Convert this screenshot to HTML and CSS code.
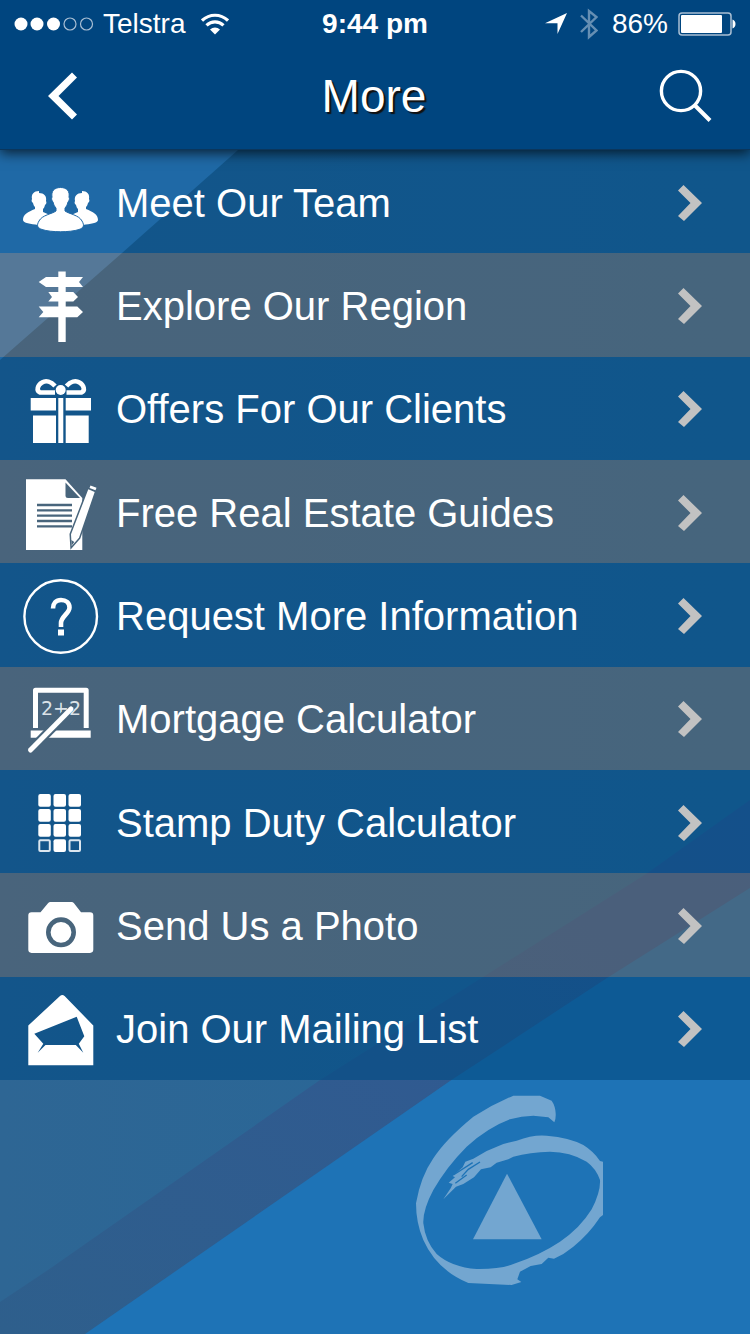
FILE: index.html
```html
<!DOCTYPE html>
<html lang="en">
<head>
<meta charset="utf-8">
<meta name="viewport" content="width=device-width">
<title>More</title>
<link rel="stylesheet" href="styles.css">
</head>
<body>
<div class="app">
  <svg class="backdrop" viewBox="0 0 750 1334" preserveAspectRatio="none" aria-hidden="true">
    <defs>
      <linearGradient id="base" x1="0" y1="0" x2="1" y2="0">
        <stop offset="0" stop-color="#2e6694"/><stop offset="1" stop-color="#266799"/>
      </linearGradient>
      <linearGradient id="band" x1="1" y1="0" x2="0" y2="1">
        <stop offset="0" stop-color="#325694"/><stop offset="1" stop-color="#2e5f8c"/>
      </linearGradient>
    </defs>
    <path fill="url(#base)" d="M0 0h750v1334H0z"/>
    <path fill="#509fe6" d="M0 150h238L122 253 0 360z"/>
    <path fill="url(#band)" d="M750 800L646 874 320 1080 48 1270 0 1302v32h90L450 1081 750 888z"/>
    <path fill="#1e73b6" d="M85 1334L450 1081 607 978 750 888v446z"/>
  </svg>

  <header class="header">
    <div class="status">
      <div class="status-group">
        <svg class="signal" viewBox="0 0 80 14" aria-hidden="true">
          <g fill="#fff"><circle cx="7" cy="7" r="6.5"/><circle cx="23" cy="7" r="6.5"/><circle cx="39.500" cy="7" r="6.500"/></g>
          <g fill="none" stroke="#a9bfd4" stroke-width="1.200"><circle cx="56" cy="7" r="6"/><circle cx="72.500" cy="7" r="6"/></g>
        </svg>
        <span class="carrier">Telstra</span>
        <svg class="wifi" viewBox="0 0 28 22" aria-hidden="true">
          <g fill="none" stroke="#fff" stroke-width="3.200"><path d="M1 7.500C8.500 .500 19.500 .500 27 7.500"/><path d="M5.500 12.300C10.500 7.600 17.500 7.600 22.500 12.300"/></g>
          <path fill="#fff" d="M9 16.500c3-2.700 7-2.700 10 0L14 21.500z"/>
        </svg>
      </div>
      <time class="clock">9:44 pm</time>
      <div class="status-group status-right">
        <svg class="location" viewBox="0 0 22 22" aria-hidden="true"><path fill="#fff" d="M22 0L12.500 21V10.300H0z"/></svg>
        <svg class="bluetooth" viewBox="0 0 18 32" aria-hidden="true"><path fill="none" stroke="#668fb3" stroke-width="2.400" d="M1 7.500l15.500 15L9 29V3l7.500 6L1 24"/></svg>
        <span class="percent">86%</span>
        <svg class="battery" viewBox="0 0 58 24" aria-hidden="true">
          <rect x="1" y="1" width="52" height="22" rx="3" fill="none" stroke="#a9bfd4" stroke-width="1.500"/>
          <rect x="3" y="3" width="41" height="18" rx="1" fill="#fff"/>
          <path fill="#fff" d="M54.500 7.500c4 1 4 8 0 9z"/>
        </svg>
      </div>
    </div>
    <nav class="nav">
      <button class="nav-button" type="button" aria-label="Back">
        <svg class="back" viewBox="0 0 29 48" aria-hidden="true"><path fill="#fff" d="M24 .500l5 5L10.500 24 29 42.500l-5 5L0 24z"/></svg>
      </button>
      <h1 class="title">More</h1>
      <button class="nav-button" type="button" aria-label="Search">
        <svg class="search" viewBox="0 0 54 54" aria-hidden="true"><g fill="none" stroke="#fff"><circle cx="22" cy="22" r="19.600" stroke-width="3.400"/><path stroke-width="4" d="M35.500 36L51 51.500"/></g></svg>
      </button>
    </nav>
  </header>

  <main class="menu">
    <a class="row" href="#team">
      <svg class="icon" viewBox="0 0 76 76" aria-hidden="true">
        <path d="M16 28c5 0 8 3 7 8 1 2 0 3-1 4-.5 2-1 3-2 4v3l7 3v10H15c-7-1-15-2-15-5 0-6 5-8 12-11v-2c-1-1-1.500-2-2-4-1-1-2-2-1-4-1-5 2-8 7-8z"/>
        <path d="M59 28c-5 0-8 3-7 8-1 2 0 3 1 4 .5 2 1 3 2 4v3l-7 3v10h12c7-1 15-2 15-5 0-6-5-8-12-11v-2c1-1 1.500-2 2-4 1-1 2-2 1-4 1-5-2-8-7-8z"/>
        <path class="body-outline" d="M37.500 22.500c6.500 0 9.500 4 8.500 9.500 1 2 0 4-1 5-.6 3-2 5-3 6v3c4 3 14 4 17 10 3 5 1 7-3 8.500-9 3-28 3-37 0-4-1.500-6-3.500-3-8.500 3-6 13-7 17-10v-3c-1-1-2.400-3-3-6-1-1-2-3-1-5-1-5.500 2-9.500 8.500-9.500z"/>
      </svg>
      <span class="label">Meet Our Team</span>
      <svg class="chevron" viewBox="0 0 24 36" aria-hidden="true"><path d="M5.500 0L24 18 6 36 0 31l12.500-13L0 5.500z"/></svg>
    </a>
    <a class="row" href="#region">
      <svg class="icon" viewBox="0 0 76 76" aria-hidden="true">
        <path d="M35.300 3.500h7.400V74h-7.400z"/>
        <path d="M15.700 14L23 9h37l-4 5 4 5H23zM25.300 24h25L55 29l-4.700 4.500h-25L29 29zM15.700 38.500h38.600L60 44l-5.700 5.300H15.700l4.600-5.300z"/>
      </svg>
      <span class="label">Explore Our Region</span>
      <svg class="chevron" viewBox="0 0 24 36" aria-hidden="true"><path d="M5.500 0L24 18 6 36 0 31l12.500-13L0 5.500z"/></svg>
    </a>
    <a class="row" href="#offers">
      <svg class="icon" viewBox="0 0 76 76" aria-hidden="true">
        <path d="M7.700 27H33v12.500H7.700zM42.700 27H68v12.500H42.700zM35.300 27h5v45h-5zM10 44.500h23V72H10zM42.700 44.500h23V72h-23z"/>
        <circle cx="37.700" cy="19" r="5"/>
        <g fill="none" stroke="#fff" stroke-width="4.600"><path d="M32 21.500H17c-4-2-2.500-7.500 2-10 4-2.500 9-1 13 3.500"/><path d="M43.500 21.500h15c4-2 2.500-7.500-2-10-4-2.500-9-1-13 3.500"/></g>
      </svg>
      <span class="label">Offers For Our Clients</span>
      <svg class="chevron" viewBox="0 0 24 36" aria-hidden="true"><path d="M5.500 0L24 18 6 36 0 31l12.500-13L0 5.500z"/></svg>
    </a>
    <a class="row" href="#guides">
      <svg class="icon" viewBox="0 0 76 76" aria-hidden="true">
        <path d="M3 4.300h39.500L59.300 23v52H3z"/>
        <path class="cut" d="M42.500 7.500L57 23H45q-2.500 0-2.500-2.500z"/>
        <path class="cut-line" stroke-width="2.300" d="M14 30h35M14 35.300h35M14 40.700h35M14 46h35M14 51.300h35"/>
        <path class="cut-line" stroke-width="3" d="M65.300 14.300l6.400 2.700L56 62.700 48.700 71 48 59.300z"/>
        <path d="M65.300 14.300l6.400 2.700L56 62.700 48.700 71 48 59.300zM67.500 10.500l6 2.200-1 2.500-6-2.200z"/>
        <path class="cut" d="M48.300 65l3 2-2.600 3.500z"/>
      </svg>
      <span class="label">Free Real Estate Guides</span>
      <svg class="chevron" viewBox="0 0 24 36" aria-hidden="true"><path d="M5.500 0L24 18 6 36 0 31l12.500-13L0 5.500z"/></svg>
    </a>
    <a class="row" href="#information">
      <svg class="icon" viewBox="0 0 76 76" aria-hidden="true">
        <circle cx="37.700" cy="38.500" r="36.300" fill="none" stroke="#fff" stroke-width="2.400"/>
        <path fill="none" stroke="#fff" stroke-width="4.600" d="M30 30.500c0-5 3-8.500 8-8.500s8.500 3 8.500 7.500c0 6-8.500 9-8.500 15.500V49"/>
        <path d="M35 51.500h6v6h-6z"/>
      </svg>
      <span class="label">Request More Information</span>
      <svg class="chevron" viewBox="0 0 24 36" aria-hidden="true"><path d="M5.500 0L24 18 6 36 0 31l12.500-13L0 5.500z"/></svg>
    </a>
    <a class="row" href="#mortgage">
      <svg class="icon" viewBox="0 0 76 76" aria-hidden="true">
        <path fill="none" stroke="#fff" stroke-width="5" stroke-linejoin="round" d="M12.500 47V9.300h50.700V47"/>
        <path d="M7.700 49.500h60v7.300h-60z"/>
        <text class="sum" x="18" y="34">2+2</text>
        <path class="cut-line" stroke-width="9" d="M10 66.500L44 32"/>
        <path fill="none" stroke="#fff" stroke-width="5" stroke-linecap="round" d="M7.500 69L48 28"/>
      </svg>
      <span class="label">Mortgage Calculator</span>
      <svg class="chevron" viewBox="0 0 24 36" aria-hidden="true"><path d="M5.500 0L24 18 6 36 0 31l12.500-13L0 5.500z"/></svg>
    </a>
    <a class="row" href="#stamp-duty">
      <svg class="icon" viewBox="0 0 76 76" aria-hidden="true">
        <rect x="15.300" y="9" width="12.500" height="12.700" rx="2"/><rect x="30.500" y="9" width="12.500" height="12.700" rx="2"/><rect x="45.500" y="9" width="12.500" height="12.700" rx="2"/>
        <rect x="15.300" y="24" width="12.500" height="12.700" rx="2"/><rect x="30.500" y="24" width="12.500" height="12.700" rx="2"/><rect x="45.500" y="24" width="12.500" height="12.700" rx="2"/>
        <rect x="15.300" y="39" width="12.500" height="12.700" rx="2"/><rect x="30.500" y="39" width="12.500" height="12.700" rx="2"/><rect x="45.500" y="39" width="12.500" height="12.700" rx="2"/>
        <rect x="30.500" y="54.200" width="12.500" height="12.700" rx="2"/>
        <g fill="none" stroke="#dbe6ef" stroke-width="2"><rect x="16.300" y="55.200" width="10.500" height="10.700" rx="1"/><rect x="46.500" y="55.200" width="10.500" height="10.700" rx="1"/></g>
      </svg>
      <span class="label">Stamp Duty Calculator</span>
      <svg class="chevron" viewBox="0 0 24 36" aria-hidden="true"><path d="M5.500 0L24 18 6 36 0 31l12.500-13L0 5.500z"/></svg>
    </a>
    <a class="row" href="#photo">
      <svg class="icon" viewBox="0 0 76 76" aria-hidden="true">
        <path d="M8.500 24.300h9l7.500-9q1-1.300 2.500-1.300h21q1.500 0 2.500 1.300l7 9h9q3.300 0 3.300 3.300v34q0 3.300-3.300 3.300H8.500q-3.200 0-3.200-3.300v-34q0-3.300 3.200-3.300z"/>
        <circle class="cut-line" cx="38" cy="44.300" r="12.700" stroke-width="4.600"/>
      </svg>
      <span class="label">Send Us a Photo</span>
      <svg class="chevron" viewBox="0 0 24 36" aria-hidden="true"><path d="M5.500 0L24 18 6 36 0 31l12.500-13L0 5.500z"/></svg>
    </a>
    <a class="row" href="#mailing-list">
      <svg class="icon" viewBox="0 0 76 76" aria-hidden="true">
        <path fill-rule="evenodd" d="M5.300 34.500L37 5q2.300-2 4.600 0l28.700 29.500v39.700h-65zM11.300 42.800l9 10-5.600 9L22.500 54h30.300l7.500 7.800-4.500-9 5.500-7.600-7.600-19.400z"/>
      </svg>
      <span class="label">Join Our Mailing List</span>
      <svg class="chevron" viewBox="0 0 24 36" aria-hidden="true"><path d="M5.500 0L24 18 6 36 0 31l12.500-13L0 5.500z"/></svg>
    </a>
  </main>

  <footer class="footer">
    <svg class="logo" viewBox="48 45 561 570" role="img" aria-label="Brush circle with triangle">
      <path d="M463 127L445 112 400 107Q365 108 330 118 265 142 200 200 140 260 100 330 68 390 70 430 76 485 110 522 155 562 230 567 300 568 340 552 420 525 480 485 540 445 575 388 602 335 600 300 588 265 560 245 510 215 450 215 390 216 340 230L325 238 290 248 272 262 243 268 222 292 190 312 168 320 130 358 152 325 158 312 146 308 165 292 158 288 188 262 196 245 220 236 260 213 310 192 350 182Q400 163 440 167 510 173 550 195 582 215 600 243L609 245V405L600 412Q565 465 520 500L490 522 462 536 445 533 425 552 392 558 360 575 352 598 364 606 335 615 205 609Q110 570 70 480 48 430 48 370 62 290 100 235 135 180 220 110 280 72 340 47H420L455 62Q466 78 467 100 468 118 463 127z"/>
      <path d="M321 281L425 478H219z"/>
      <g fill="none" stroke="#1e73b6" stroke-width="4"><path d="M160 285L218 248M185 290L205 268 240 246M166 310L200 285"/></g>
    </svg>
  </footer>
</div>
</body>
</html>
```
FILE: styles.css
```css
* {
  box-sizing: border-box;
}

body {
  margin: 0;
  background: #1e73b6;
  color: #fff;
  font-family: "Liberation Sans", Arial, sans-serif;
}

svg {
  display: block;
  flex: none;
}

.app {
  position: relative;
  isolation: isolate;
  display: flex;
  flex-direction: column;
  min-height: 100vh;
  overflow: hidden;
}

.backdrop {
  position: absolute;
  inset: 0;
  z-index: -1;
  width: 100%;
  height: 100%;
}

.header {
  position: relative;
  z-index: 1;
  background: #00457f;
  border-bottom: 1px solid #0b365c;
  box-shadow: 0 3px 12px rgba(0, 0, 0, 0.7);
}

.status {
  display: grid;
  grid-template-columns: 1fr auto 1fr;
  align-items: center;
  height: 48px;
  padding: 0 14px;
  font-size: 28px;
  line-height: 32px;
}

.status-group {
  display: flex;
  align-items: center;
}

.status-right {
  justify-content: flex-end;
}

.signal {
  width: 80px;
  height: 14px;
}

.carrier {
  margin: 0 16px 0 9px;
}

.wifi {
  width: 28px;
  height: 22px;
}

.clock {
  font-weight: bold;
}

.location {
  width: 22px;
  height: 22px;
}

.bluetooth {
  width: 18px;
  height: 32px;
  margin: 0 14px 0 13px;
}

.battery {
  width: 58px;
  height: 24px;
  margin-left: 10px;
}

.nav {
  display: flex;
  align-items: center;
  justify-content: space-between;
  height: 101px;
  padding: 0 34px 6px 32px;
}

.nav-button {
  display: flex;
  align-items: center;
  justify-content: center;
  width: 60px;
  height: 60px;
  padding: 0;
  border: 0;
  background: none;
}

.back {
  width: 29px;
  height: 48px;
}

.search {
  width: 54px;
  height: 54px;
}

.title {
  margin: 0;
  font-size: 46px;
  font-weight: normal;
  line-height: 56px;
  text-shadow: 2px 2px 1px #111;
}

.menu {
  display: grid;
  grid-auto-rows: 1fr;
  min-height: 930px;
}

.row {
  --row-color: #15568a;
  display: flex;
  align-items: center;
  gap: 17px;
  padding: 2px 48px 0 23px;
  background: rgba(5, 77, 132, 0.65);
  color: inherit;
  text-decoration: none;
}

.row:nth-child(even) {
  --row-color: #48657c;
  background: rgba(88, 100, 111, 0.65);
}

.icon {
  width: 76px;
  height: 76px;
  fill: #fff;
}

.cut {
  fill: var(--row-color);
}

.cut-line {
  fill: none;
  stroke: var(--row-color);
}

.body-outline {
  stroke: #2069a7;
  stroke-width: 1;
}

.sum {
  fill: #dbe2e8;
  font: 19px "DejaVu Sans", sans-serif;
}

.label {
  flex: 1;
  font-size: 40px;
  line-height: 48px;
}

.chevron {
  width: 24px;
  height: 36px;
  fill: #c2c2c2;
}

.footer {
  display: flex;
  justify-content: flex-end;
  padding: 15px 147px 48px;
}

.logo {
  width: 187px;
  height: 190px;
  fill: #73a6d0;
}
```
